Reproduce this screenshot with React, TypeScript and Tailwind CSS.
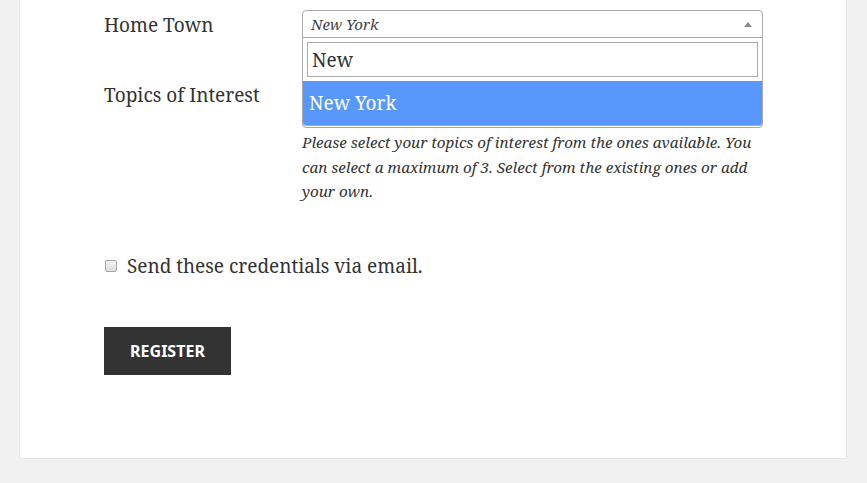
export default function App() {
  return (
    <div className="min-h-[483px] w-full bg-[#f1f1f1] font-['Noto_Serif','DejaVu_Serif',serif] text-[#333]">
      <div className="ml-[20px] w-[826px] bg-white pb-[83px] shadow-[0_0_1px_rgba(0,0,0,0.25)]">
        <div className="pl-[84px] pr-[83px] pt-[10px]">
          {/* Home Town */}
          <div className="flex">
            <label className="w-[198px] pt-[2px] text-[19px] leading-[26px]">Home Town</label>
            <div className="relative w-[461px]">
              <div className="flex h-[28px] items-center justify-between rounded-t-[4px] border border-[#aaa] pl-[8px] pr-[8px]">
                <span className="pt-[1px] text-[15px] italic text-[#444]">New York</span>
                <svg width="8" height="5" viewBox="0 0 8 5" className="mr-[2px]">
                  <path d="M0 5 L4 0 L8 5 Z" fill="#888" />
                </svg>
              </div>
              {/* open dropdown */}
              <div className="absolute left-0 top-[28px] z-10 w-[461px] rounded-b-[4px] border border-t-0 border-[#aaa] bg-white">
                <div className="p-[4px]">
                  <div className="flex h-[35px] items-center border border-[#aaa] px-[4px] pt-[2px] text-[19px] text-[#333]">
                    New
                  </div>
                </div>
                <div className="flex h-[44px] items-center rounded-b-[3px] bg-[#5897fb] px-[6px] text-[19px] text-white">
                  New York
                </div>
              </div>
            </div>
          </div>

          {/* Topics of Interest */}
          <div className="mt-[43px] flex">
            <label className="w-[198px] pt-[1px] text-[19px] leading-[26px]">Topics of Interest</label>
            <div className="w-[461px]">
              <div className="h-[47px] rounded-[4px] border border-[#aaa]" />
              <p className="mt-[2px] text-[15.2px] italic leading-[24.5px] text-[#333]">
                Please select your topics of interest from the ones available. You can select a maximum of 3. Select from the existing ones or add your own.
              </p>
            </div>
          </div>

          {/* Send credentials */}
          <div className="mt-[49px] flex items-center">
            <span className="ml-[1px] inline-block h-[12px] w-[12px] rounded-[2px] border border-[#a6a6a6] bg-gradient-to-b from-[#f4f4f4] to-[#dedede]" />
            <span className="ml-[10px] text-[19px] leading-[26px]">Send these credentials via email.</span>
          </div>

          {/* Register */}
          <button className="mt-[48px] flex h-[48px] w-[127px] items-center justify-center bg-[#333] font-['Noto_Sans',sans-serif] text-[16px] font-bold uppercase text-white">
            Register
          </button>
        </div>
      </div>
    </div>
  );
}
